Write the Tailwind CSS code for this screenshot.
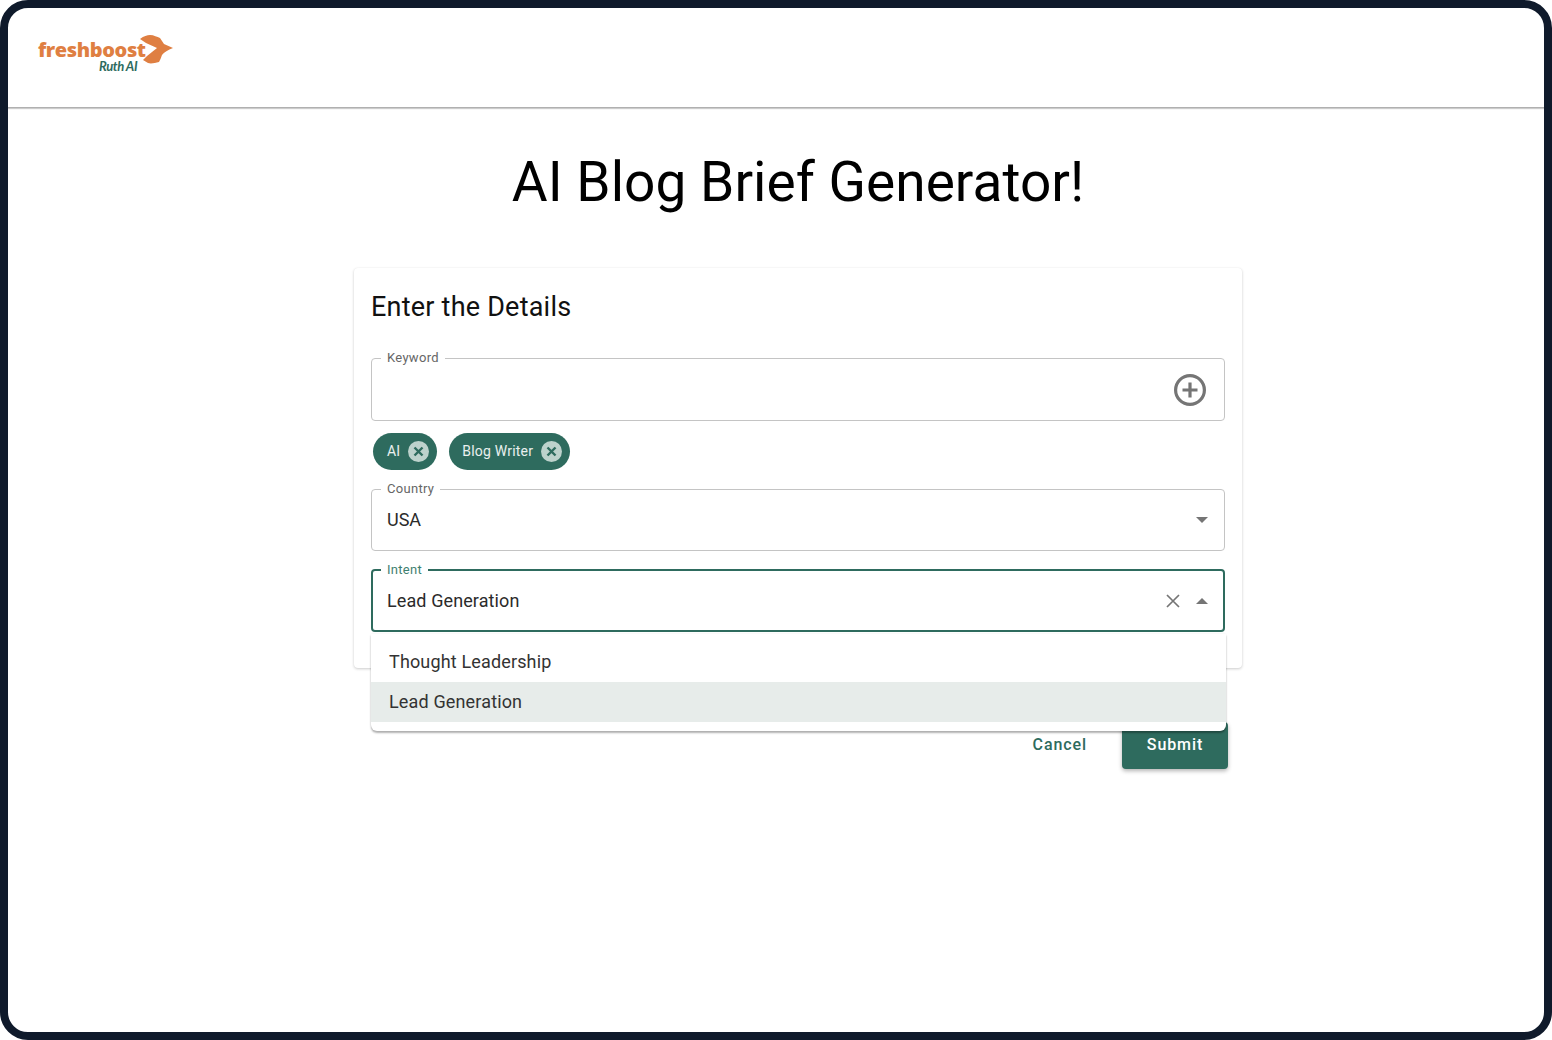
<!DOCTYPE html>
<html lang="en">
<head>
  <meta charset="UTF-8">
  <script src="https://cdn.jsdelivr.net/npm/@tailwindcss/browser@4"></script>
  <title>AI Blog Brief Generator</title>
</head>
<body class="bg-white h-[1040px] w-[1552px] overflow-hidden font-['Roboto',sans-serif]">
  <!-- Frame -->
  <div class="h-[1040px] w-[1552px] border-8 border-[#0f1a2b] rounded-[28px] bg-white overflow-hidden">

    <!-- Header -->
    <header class="h-[100px] border-b border-[#b0b0b0] shadow-[0_1px_1px_rgba(0,0,0,0.2)] pl-[30px] pt-[27px]">
      <div class="relative w-[136px] h-[40px]">
        <span class="block pt-[6px] text-[20px] leading-[18px] font-extrabold tracking-[-0.4px] text-[#df7f42] font-['Open_Sans',sans-serif]">freshboost</span>
        <svg class="absolute left-[102px] top-[0px]" width="34" height="30" viewBox="0 0 34 30">
          <path fill="#df7f42" d="M0 4 C4 1 7 0 10 0 C14 0 17 2 20 3 L24 9 L33 13 C28 15 24 17 22 20 C21 23 20 25 19 27 C15 28 11 29 8 28 L3 25 L7 21 L17 13 L6 8 Z"/>
        </svg>
        <span class="absolute left-[61px] top-[25px] text-[13px] leading-[12px] font-bold italic tracking-[-0.4px] text-[#2e6b5e] font-['Lato',sans-serif]">Ruth AI</span>
      </div>
    </header>

    <main class="flex flex-col items-center pl-[44px]">
      <h1 class="mt-[41px] h-[65px] text-[55px] leading-[66px] tracking-[0.04px] font-normal text-black">AI Blog Brief Generator!</h1>

      <div class="relative mt-[54px] w-[888px]">
        <!-- Card -->
        <section class="h-[400px] w-[888px] rounded-[4px] bg-white px-[17px] shadow-[0_1px_3px_rgba(0,0,0,0.2),0_0_1px_rgba(0,0,0,0.06)]">
          <h2 class="pt-[21px] h-[90px] text-[27px] leading-[36px] tracking-[0.22px] font-normal text-[#111]">Enter the Details</h2>

          <!-- Keyword -->
          <fieldset class="h-[71px] rounded-[4px] border border-[#c4c4c4] pl-[9px] pr-[17px] flex items-center justify-end -mt-[8px]">
            <legend class="px-[6px] text-[13px] leading-[16px] tracking-[0.3px] text-[#666]">Keyword</legend>
            <svg class="-mt-[6px]" width="34" height="34" viewBox="0 0 34 34" fill="none" stroke="#757575" stroke-width="3.2">
              <circle cx="17" cy="17" r="14.4"/>
              <path d="M17 9.5v15M9.5 17h15"/>
            </svg>
          </fieldset>

          <!-- Chips -->
          <div class="flex gap-[12px] pl-[2px] mt-[12px] h-[37px]">
            <span class="h-[37px] pl-[14px] pr-[8px] rounded-full bg-[#2e6b5e] flex items-center gap-[8px] text-[14px] tracking-[0.2px] text-white/90">AI
              <svg width="21" height="21" viewBox="0 0 21 21"><circle cx="10.5" cy="10.5" r="10.5" fill="#bdd2cc"/><path d="M6.5 6.5l8 8M14.5 6.5l-8 8" stroke="#2e6b5e" stroke-width="2.4"/></svg>
            </span>
            <span class="h-[37px] pl-[13px] pr-[8px] rounded-full bg-[#2e6b5e] flex items-center gap-[8px] text-[14px] tracking-[0.2px] text-white/90">Blog Writer
              <svg width="21" height="21" viewBox="0 0 21 21"><circle cx="10.5" cy="10.5" r="10.5" fill="#bdd2cc"/><path d="M6.5 6.5l8 8M14.5 6.5l-8 8" stroke="#2e6b5e" stroke-width="2.4"/></svg>
            </span>
          </div>

          <!-- Country -->
          <fieldset class="h-[70px] mt-[11px] rounded-[4px] border border-[#c4c4c4] pl-[9px] pr-[16px] flex items-center justify-between">
            <legend class="px-[6px] text-[13px] leading-[16px] tracking-[0.3px] text-[#666]">Country</legend>
            <span class="pl-[6px] -mt-[8px] text-[18px] leading-[24px] text-[#2b2b2b]">USA</span>
            <span class="-mt-[8px] w-0 h-0 border-x-[6px] border-x-transparent border-t-[6px] border-t-[#757575]"></span>
          </fieldset>

          <!-- Intent -->
          <fieldset class="h-[70px] mt-[11px] rounded-[4px] border-2 border-[#2e6b5e] pl-[8px] pr-[15px] flex items-center justify-between">
            <legend class="px-[6px] text-[13px] leading-[16px] tracking-[0.3px] text-[#3f7f70]">Intent</legend>
            <span class="pl-[6px] -mt-[6px] text-[18px] leading-[24px] tracking-[0.1px] text-[#2b2b2b]">Lead Generation</span>
            <span class="flex items-center gap-[15px] -mt-[6px]">
              <svg width="16" height="16" viewBox="0 0 16 16" stroke="#757575" stroke-width="1.7"><path d="M2 2l12 12M14 2L2 14"/></svg>
              <span class="w-0 h-0 border-x-[6px] border-x-transparent border-b-[6px] border-b-[#757575]"></span>
            </span>
          </fieldset>
        </section>

        <!-- Dropdown menu -->
        <ul class="absolute z-10 left-[17px] top-[366px] w-[855px] h-[97px] pt-[8px] rounded-b-[6px] bg-white shadow-[0_2px_2px_rgba(0,0,0,0.3),0_0_2px_rgba(0,0,0,0.08)] text-[18px] tracking-[0.15px] text-[#333]">
          <li class="h-[40px] pl-[18px] leading-[40px]">Thought Leadership</li>
          <li class="h-[40px] pl-[18px] leading-[40px] bg-[#e7ecea]">Lead Generation</li>
        </ul>

        <!-- Actions -->
        <div class="flex justify-end items-center gap-[35px] mt-[54px] pr-[14px]">
          <button class="pb-[2px] text-[16px] font-medium tracking-[0.9px] text-[#2e6b5e]">Cancel</button>
          <button class="h-[47px] w-[106px] pb-[2px] rounded-[4px] bg-[#2e6b5e] text-white text-[16px] font-medium tracking-[0.9px] shadow-[0_2px_4px_rgba(0,0,0,0.3)]">Submit</button>
        </div>
      </div>
    </main>
  </div>
</body>
</html>
